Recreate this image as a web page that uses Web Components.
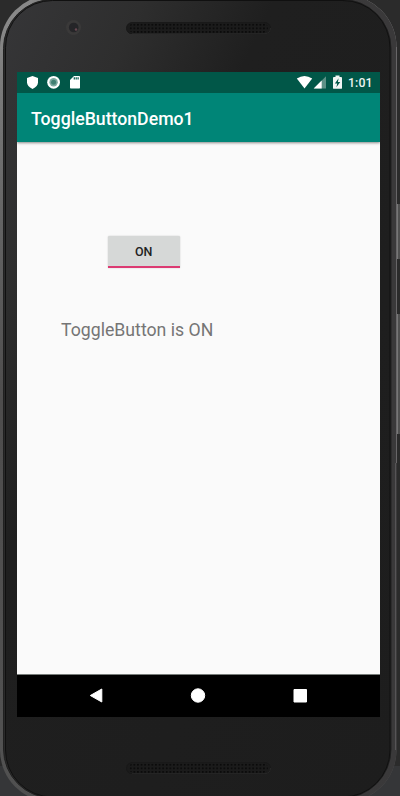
<!DOCTYPE html>
<html lang="en"><head><meta charset="utf-8"><title>ToggleButtonDemo1</title>
<style>html,body{margin:0;width:400px;height:796px;overflow:hidden;background:#2b2b2b;font-family:Roboto,"Liberation Sans",sans-serif}</style></head>
<body>
<phone-frame>
  <status-bar>1:01</status-bar>
  <app-bar>ToggleButtonDemo1</app-bar>
  <app-content><toggle-button>ON</toggle-button><status-label>ToggleButton is ON</status-label></app-content>
  <nav-bar></nav-bar>
</phone-frame>
<script>
function define(name, html){
  customElements.define(name, class extends HTMLElement{
    constructor(){super();this.attachShadow({mode:'open'}).innerHTML=html;}
  });
}
define('speaker-grille', `<style>:host{display:block;width:145px;height:12px}svg{display:block}</style>
<svg width="145" height="12"><defs><pattern id="d" width="3.6" height="3.6" patternUnits="userSpaceOnUse" x="3" y="1"><rect x="1" y="1" width="1.5" height="1.5" fill="#050505"/></pattern></defs>
<rect x=".5" y=".5" width="144" height="11.4" rx="5.7" fill="#1b1b1b" stroke="#191919"/>
<rect x="3" y="1" width="139" height="10" rx="5" fill="url(#d)"/><path d="M6 11.7H139Q144.5 11 144.5 6" fill="none" stroke="#333" stroke-width=".6"/></svg>`);
define('phone-chassis', `<style>:host{display:block}svg{display:block}</style>
<svg width="400" height="796"><defs>
<linearGradient id="b" x1="0" y1="0" x2="1" y2="1"><stop offset="0" stop-color="#363638"/><stop offset=".18" stop-color="#2e2e2e"/><stop offset=".35" stop-color="#1f1f1f"/><stop offset="1" stop-color="#1d1d1d"/></linearGradient>
<linearGradient id="r" x1="0" y1="0" x2="0" y2="1"><stop offset="0" stop-color="#929292"/><stop offset=".1" stop-color="#7c7c7c"/><stop offset=".28" stop-color="#646464"/><stop offset=".5" stop-color="#4e4d4d"/><stop offset="1" stop-color="#525252"/></linearGradient>
<linearGradient id="s" x1="0" y1="0" x2="1" y2="0"><stop offset="0" stop-color="#333" stop-opacity="0"/><stop offset=".08" stop-color="#333" stop-opacity=".1"/><stop offset=".25" stop-color="#333" stop-opacity=".9"/><stop offset="1" stop-color="#3a393a"/></linearGradient>
</defs>
<rect width="400" height="796" fill="#2b2b2b"/><path d="M0 766H400V796H0Z" fill="#353638"/>
<path d="M396.500 204h3.500v55h-3.500zM396.500 314h3.500v120h-3.500z" fill="#505050"/><path d="M397.500 204v55M397.500 314v120" stroke="#777"/>
<rect x="0" y="-5" width="396.500" height="807" rx="52" fill="url(#r)"/>
<rect x="0" y="-5" width="396.500" height="807" rx="52" fill="url(#s)"/>
<path d="M396.500 47V463" stroke="#686668"/><path d="M395.500 463V750" stroke="#565456"/>
<rect x="3.500" y="-.5" width="387.500" height="798.500" rx="49" fill="#2a2a2a" stroke="#202020"/>
<rect x="5.500" y=".5" width="384.500" height="796.500" rx="47" fill="url(#b)" stroke="#101010"/>
<circle cx="73.500" cy="27.500" r="7.500" fill="#3a3939"/><circle cx="73.700" cy="27.500" r="4.800" fill="#252528"/><circle cx="76" cy="29.500" r="1.200" fill="#684852"/>
</svg>`);
define('phone-frame', `<style>:host{display:grid;width:400px;height:796px;overflow:hidden;grid-template-rows:796px;grid-template-columns:400px}
phone-chassis,.body{grid-area:1/1}.body{z-index:1;display:flex;flex-direction:column;align-items:center;box-sizing:border-box;padding:22px 20px 0 17px}
.body>:first-child{margin-bottom:38px;margin-right:1px}.body>:last-child{margin-top:45px;margin-right:1px}
.screen{width:363px;height:645px;background:#fafafa;display:flex;flex-direction:column}</style>
<phone-chassis></phone-chassis><div class="body"><speaker-grille></speaker-grille><div class="screen"><slot></slot></div><speaker-grille></speaker-grille></div>`);
define('status-bar', `<style>:host{display:flex;flex:none;height:21px;background:#015748;color:#edf3f1;font:500 12.3px/21px Roboto,sans-serif}svg{display:block;flex:none}.t{display:block;margin-left:2px;padding-top:.5px;letter-spacing:.1px}</style>
<svg width="329" height="21" fill="#fff">
<path d="M15.5 4 21 6v4.3q0 4.2-5.5 6.7Q10 14.5 10 10.300V6z"/>
<circle cx="36.600" cy="10.300" r="6.400"/><circle cx="36.600" cy="10.300" r="4.200" fill="#7daaa1"/><circle cx="36.600" cy="10.300" r="2.500" fill="#3f7f72"/>
<path d="M57 4h5.200q.8 0 .8.800v11q0 .8-.8.800h-8.400q-.8 0-.8-.8V8z"/><path d="M57.300 5.300v2.200M59.200 5.300v2.200M61.100 5.300v2.200" stroke="#015748" stroke-width="1.200"/>
<path d="M279.800 6.500Q287.500 1.400 295.200 6.500L287.500 16.600z"/>
<path d="M309 4.300V16.500H296.700z" fill="#5c9186"/><path d="M304.700 8.600V16.500H296.700z"/>
<path d="M318.500 3.500h4V5h1.600q.9 0 .9.900v10q0 .9-.9.900h-7.200q-.9 0-.9-.9v-10q0-.9.900-.9h1.600z" fill="#f2f6f5"/>
<path d="M321.600 6.300 317.900 11.400H320.200L319.400 15.300 323.200 10.100H320.900z" fill="#015748"/>
</svg><span class="t"><slot></slot></span>`);
define('app-bar', `<style>:host{display:flex;flex:none;align-items:center;height:49px;padding:2px 14px 0;background:#008577;color:#fff;font:500 17.700px/24px Roboto,sans-serif;box-sizing:border-box;box-shadow:0 1px 2.500px rgba(0,0,0,.45);white-space:nowrap;clip-path:inset(0 0 -6px 0);position:relative}</style><slot></slot>`);
define('app-content', `<style>:host{display:flex;flex:1;flex-direction:column;align-items:flex-start;box-sizing:border-box;padding:93.500px 0 0 91px;border-bottom:1px solid #777c79;background:#fafafa}</style><slot></slot>`);
define('toggle-button', `<style>:host{display:block}button{display:block;width:71.500px;height:32.500px;box-sizing:border-box;padding:1px 0 0;border:0;border-bottom:2px solid #dc3a72;border-radius:1.500px 1.500px 0 0;background:#d6d8d7;color:#222;font:500 12.500px/30px Roboto,sans-serif;box-shadow:0 0 1.500px rgba(0,0,0,.25)}</style><button><slot></slot></button>`);
define('status-label', `<style>:host{display:block;margin:50px 0 0 -47px;color:#757575;font:400 17.700px/24px Roboto,sans-serif;white-space:nowrap}</style><slot></slot>`);
define('nav-bar', `<style>:host{display:block;flex:none;height:42px;background:#000}svg{display:block}</style>
<svg width="363" height="42" fill="#fff" stroke="#fff" stroke-linejoin="round"><path d="M73.300 20.500 84.800 14v13z"/><circle cx="181" cy="20.500" r="6.700"/><path d="M277 14.500h12.500v12.500H277z"/></svg>`);
</script></body></html>
